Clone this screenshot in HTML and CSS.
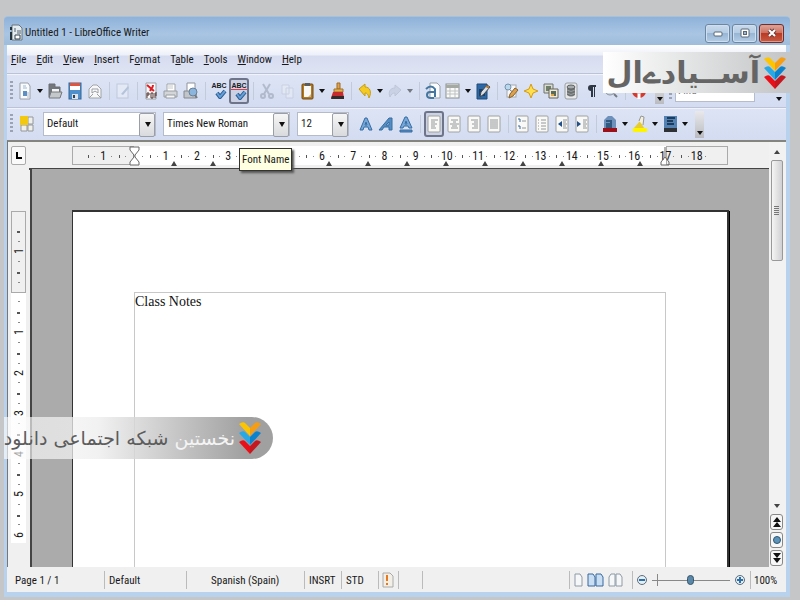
FILE: index.html
```html
<!DOCTYPE html>
<html lang="en">
<head>
<meta charset="utf-8">
<title>Untitled 1 - LibreOffice Writer</title>
<link rel="stylesheet" href="styles.css">
</head>
<body>
<div class="window">
  <header class="titlebar">
    <svg class="app-icon" width="13" height="18" viewBox="0 0 13 18"><path d="M2 1h7l3 3v12H2z" fill="#e4ecef" stroke="#68747c"/><path d="M4 5h2M4 7h2M7 7h4M7 9h4" stroke="#52616c"/><path d="M1 3v3M1 8v8" stroke="#26343c" stroke-width="2"/><path d="M5 11h5v4H5z" fill="#fff" stroke="#33424c"/></svg>
    <h1>Untitled 1 - LibreOffice Writer</h1>
    <button class="win-btn" aria-label="Minimize"><svg width="12" height="10" viewBox="0 0 12 10"><rect x="2" y="4" width="8" height="4" rx="1" fill="#fff" stroke="#5a6674"/></svg></button>
    <button class="win-btn" aria-label="Maximize"><svg width="12" height="12" viewBox="0 0 12 12"><rect x="2" y="2" width="8" height="8" rx="1" fill="#fff" stroke="#5a6674"/><rect x="4.500" y="4.500" width="3" height="3" fill="#9db8d4" stroke="#5a6674"/></svg></button>
    <button class="win-btn close" aria-label="Close"><svg width="12" height="12" viewBox="0 0 12 12"><path d="M3 3l6 6M9 3l-6 6" stroke="#6e3d3c" stroke-width="4"/><path d="M3 3l6 6M9 3l-6 6" stroke="#fff" stroke-width="2"/></svg></button>
  </header>

  <nav class="menubar">
    <a href="#"><u>F</u>ile</a><a href="#"><u>E</u>dit</a><a href="#"><u>V</u>iew</a><a href="#"><u>I</u>nsert</a><a href="#">F<u>o</u>rmat</a><a href="#">T<u>a</u>ble</a><a href="#"><u>T</u>ools</a><a href="#"><u>W</u>indow</a><a href="#"><u>H</u>elp</a>
  </nav>

  <div class="toolbar">
    <i class="grip"></i>
    <button class="tool" aria-label="New"><svg viewBox="0 0 16 18"><path d="M3 1h8l2 3v13H3z" fill="#fafbfc" stroke="#9aa0a8"/><path d="M6 4h3M6 6h4" stroke="#9fb7d0"/><rect x="6" y="9" width="4" height="5" fill="#5c8fc4"/><path d="M11 10v6" stroke="#b7bcc3"/></svg></button>
    <button class="drop" aria-label="New menu"></button>
    <button class="tool" aria-label="Open"><svg viewBox="0 0 16 18"><path d="M2 15V2h6v3h5v9z" fill="#72777b" stroke="#6b6f73"/><path d="M5 7h7v5H5z" fill="#f3f4f5"/><path d="M2 16l2-6h11l-2 6z" fill="#c4c8cb" stroke="#75797d"/></svg></button>
    <button class="tool" aria-label="Save"><svg viewBox="0 0 16 18"><rect x="2" y="1" width="12" height="16" fill="#4f8fcb" stroke="#336594"/><path d="M3 1h10v7H3z" fill="#fff"/><path d="M3 1h10v3H3z" fill="#e2543b"/><path d="M5 12h6v5H5z" fill="#dce2e8"/><path d="M6 13h2v3H6z" fill="#29405a"/></svg></button>
    <button class="tool" aria-label="E-mail"><svg viewBox="0 0 16 18"><path d="M2 16V7l4-4h4l4 4v9z" fill="#f8f8f8" stroke="#a0a4a8"/><path d="M5 11V7h6v4l-3-2zM2 16l4-4M14 16l-4-4" fill="#fff" stroke="#9a9fa4"/></svg></button>
    <i class="sep"></i>
    <button class="tool dim" aria-label="Edit file"><svg viewBox="0 0 16 18"><rect x="2" y="2" width="11" height="14" fill="#eef2f8" stroke="#a9b4c6"/><path d="M6 12l7-8 1 2-6 7z" fill="#93a9c4"/></svg></button>
    <i class="sep"></i>
    <button class="tool" aria-label="Export as PDF"><svg viewBox="0 0 16 18"><path d="M3 1h10v16H3z" fill="#fafafa" stroke="#9ba0a6"/><path d="M4 3l7 6M10 3c0 3-2 4-3 6" stroke="#e01b24" stroke-width="2" fill="none"/><path d="M4 11v5M4 11h2v2H4M8 11v5h2v-5zM12 16v-5h2M12 13h2" stroke="#50302f" fill="none"/></svg></button>
    <button class="tool" aria-label="Print"><svg viewBox="0 0 16 18"><path d="M4 9V2h8v7" fill="#fff" stroke="#a2a6aa"/><path d="M5 4h5M5 6h5" stroke="#c5c8cc"/><path d="M1 9h13v6H1z" fill="#d3d5d8" stroke="#999da1"/><path d="M3 13h9v3H3z" fill="#f6f6f6" stroke="#9a9ea3"/></svg></button>
    <button class="tool" aria-label="Page preview"><svg viewBox="0 0 16 18"><path d="M4 9V1h8v8" fill="#fff" stroke="#8f9499"/><path d="M1 9h12v7H1z" fill="#c1c5c9" stroke="#85898e"/><circle cx="10" cy="10" r="4" fill="#8bb5dc" stroke="#6a7f95"/><path d="M12 13l2 3" stroke="#757b82" stroke-width="2"/></svg></button>
    <i class="sep"></i>
    <button class="tool abc" aria-label="Spelling"><span>ABC</span><svg viewBox="0 0 16 10"><path d="M6 4l3 4 5-6" fill="none" stroke="#2b5d93" stroke-width="4"/><path d="M6 4l3 4 5-6" fill="none" stroke="#669fd6" stroke-width="2"/></svg></button>
    <button class="tool abc pressed" aria-label="AutoSpellcheck"><span class="wavy">ABC</span><svg viewBox="0 0 16 10"><path d="M6 4l3 4 5-6" fill="none" stroke="#2b5d93" stroke-width="4"/><path d="M6 4l3 4 5-6" fill="none" stroke="#669fd6" stroke-width="2"/></svg></button>
    <i class="sep"></i>
    <button class="tool dim" aria-label="Cut"><svg viewBox="0 0 16 18"><path d="M4 2l6 10M11 2L5 12" stroke="#8d97a8" stroke-width="2"/><circle cx="4" cy="14" r="2" fill="none" stroke="#8d97a8" stroke-width="2"/><circle cx="12" cy="14" r="2" fill="none" stroke="#8d97a8" stroke-width="2"/></svg></button>
    <button class="tool dim" aria-label="Copy"><svg viewBox="0 0 16 18"><path d="M3 3h7v9H3zM7 6h7v10H7z" fill="#eceff6" stroke="#bcc2d0"/></svg></button>
    <button class="tool" aria-label="Paste"><svg viewBox="0 0 16 18"><rect x="3" y="2" width="11" height="15" rx="1" fill="#b87918" stroke="#6e4a18"/><path d="M5 4h7v11H5z" fill="#f9f9f7"/><path d="M6 1h5v3H6z" fill="#5a5d60"/><path d="M9 15l3-3v3z" fill="#b9b9b9"/></svg></button>
    <button class="drop" aria-label="Paste menu"></button>
    <button class="tool" aria-label="Format paintbrush"><svg viewBox="0 0 16 18"><path d="M8 1h3v6H8z" fill="#e0a24e" stroke="#9f6b25"/><path d="M5 7h9v3H5z" fill="#e7b04d" stroke="#a1732a"/><path d="M4 10h10l1 6H2z" fill="#c82b2e"/><path d="M3 14h12v3H2z" fill="#36292a"/></svg></button>
    <i class="sep"></i>
    <button class="tool" aria-label="Undo"><svg viewBox="0 0 16 18"><path d="M2 7l6-5v3c5 0 7 5 4 11-1-4-2-5-4-5v3z" fill="#f5cb22" stroke="#c79b13"/></svg></button>
    <button class="drop" aria-label="Undo menu"></button>
    <button class="tool dim" aria-label="Redo"><svg viewBox="0 0 16 18"><path d="M14 8L8 3v3C3 6 1 10 3 15c1-3 3-4 5-4v3z" fill="#bcc5d6" stroke="#a5aec0"/></svg></button>
    <button class="drop dim" aria-label="Redo menu"></button>
    <i class="sep"></i>
    <button class="tool" aria-label="Hyperlink"><svg viewBox="0 0 16 18"><path d="M5 1h7l3 3v12H5z" fill="#fafbfc" stroke="#99a0a8"/><path d="M1 7q5-5 9 0v8M9 10H5q-3 0-3 3t4 3h3" fill="none" stroke="#44769f" stroke-width="2"/></svg></button>
    <button class="tool" aria-label="Table"><svg viewBox="0 0 16 18"><rect x="1" y="2" width="13" height="14" fill="#fafafa" stroke="#8b8f8e"/><path d="M1 3h13v3H1z" fill="#a5a9a4"/><path d="M1 9h13M1 12h13M5 6v10M10 6v10" stroke="#bfc2c1"/></svg></button>
    <button class="drop" aria-label="Table menu"></button>
    <button class="tool" aria-label="Show draw functions"><svg viewBox="0 0 16 18"><path d="M2 2h10v15H2z" fill="#2c68a6" stroke="#204b78"/><path d="M4 7h6v7H4z" fill="#1c3f68"/><path d="M5 15l1-5 6-7 3 2-6 7z" fill="#dde1e5" stroke="#41454b"/><path d="M11 4l3 2" stroke="#b27b35" stroke-width="2"/></svg></button>
    <i class="sep"></i>
    <button class="tool" aria-label="Find and replace"><svg viewBox="0 0 16 18"><rect x="4" y="3" width="9" height="12" fill="#f5f7f8" stroke="#a4aab0"/><circle cx="5" cy="5" r="3" fill="#b9d8ee" stroke="#7593ac"/><path d="M7 8l4 3" stroke="#777"/><path d="M6 16l1-4 5-6 3 2-5 6z" fill="#dba14e" stroke="#8b6128"/></svg></button>
    <button class="tool" aria-label="Navigator"><svg viewBox="0 0 16 18"><path d="M8 2l2 5 5 2-5 2-2 5-2-5-5-2 5-2z" fill="#ffe04a" stroke="#d79b15"/></svg></button>
    <button class="tool" aria-label="Gallery"><svg viewBox="0 0 16 18"><path d="M1 2h9v9H1z" fill="#d9dcd2" stroke="#70736c"/><path d="M3 4h5v5H3z" fill="#707f68"/><path d="M6 7h9v9H6z" fill="#eee8d8" stroke="#66655d"/><path d="M8 9h5v5H8z" fill="#596a58"/><path d="M8 12h3v2H8z" fill="#e2a43c"/></svg></button>
    <button class="tool" aria-label="Data sources"><svg viewBox="0 0 16 18"><rect x="2" y="1" width="12" height="16" rx="2" fill="#e6e8e9" stroke="#9b9fa2"/><path d="M4 5v8q4 3 8 0V5z" fill="#6d7172"/><ellipse cx="8" cy="5" rx="4" ry="2" fill="#a7abad" stroke="#5d6162"/><path d="M4 8q4 3 8 0M4 11q4 3 8 0" fill="none" stroke="#9a9d9f"/></svg></button>
    <button class="tool" aria-label="Nonprinting characters"><svg viewBox="0 0 16 18"><path d="M13 3H8a3 3 0 0 0 0 6v6h2V5h1v10h1V5h1z" fill="#303744"/></svg></button>
    <button class="tool" aria-label="Zoom"><svg viewBox="0 0 16 18"><circle cx="7" cy="8" r="5" fill="#cbd8e8" stroke="#8b919c"/><path d="M11 12l3 3" stroke="#777b84" stroke-width="2"/></svg></button>
    <i class="sep"></i>
    <button class="tool" aria-label="Help"><svg viewBox="0 0 16 18"><circle cx="8" cy="9" r="5" fill="none" stroke="#d8392c" stroke-width="4"/><path d="M8 12v5M3 6l2 1M13 6l-2 1" stroke="#fff" stroke-width="3"/></svg></button>
    <button class="overflow" aria-label="More tools"></button>
    <i class="grip find-grip"></i>
    <input class="find" type="text" placeholder="Find" aria-label="Find">
    <button class="overflow last" aria-label="More find tools"></button>
  </div>

  <div class="toolbar format">
    <i class="grip"></i>
    <button class="tool styles" aria-label="Styles and formatting"><svg viewBox="0 0 16 18"><path d="M9 2h5v7H9zM2 10h6v6H2zM9 10h5v6H9z" fill="#f0f0ea" stroke="#b0ada5"/><path class="bare" d="M1 1h8v9H1z" fill="#f2c811"/></svg></button>
    <span class="combo style-box"><select aria-label="Paragraph style"><option>Default</option></select></span>
    <span class="combo font-box"><select aria-label="Font name"><option>Times New Roman</option></select><span class="tooltip" role="tooltip">Font Name</span></span>
    <span class="combo size-box"><select aria-label="Font size"><option>12</option></select></span>
    <button class="tool" aria-label="Bold"><svg viewBox="0 0 16 18"><path d="M2 15L7 3h2l5 12h-3l-1-3H6l-1 3zM7 10h2L8 7z" fill="#77a7d8" stroke="#376da3"/></svg></button>
    <button class="tool" aria-label="Italic"><svg viewBox="0 0 16 18"><path d="M1 15L11 3h3v12h-3v-3H6l-2 3zM8 10h3V7z" fill="#568dc1" stroke="#376da3"/></svg></button>
    <button class="tool" aria-label="Underline"><svg viewBox="0 0 16 18"><path d="M2 13L7 2h2l5 11h-3l-1-2H6l-1 2zM7 9h2L8 6z" fill="#77a7d8" stroke="#376da3"/><path d="M2 15h12v2H2z" fill="#568dc1"/></svg></button>
    <i class="sep"></i>
    <button class="tool pressed" aria-label="Align left"><svg viewBox="0 0 16 18"><use href="#sheet"/><path d="M5 5h7M5 7h4M5 9h6M5 11h4M5 13h5"/></svg></button>
    <button class="tool" aria-label="Center"><svg viewBox="0 0 16 18"><use href="#sheet"/><path d="M5 5h7M7 7h3M4 9h9M6 11h5M5 13h7"/></svg></button>
    <button class="tool" aria-label="Align right"><svg viewBox="0 0 16 18"><use href="#sheet"/><path d="M5 5h7M8 7h4M6 9h6M8 11h4M6 13h6"/></svg></button>
    <button class="tool" aria-label="Justify"><svg viewBox="0 0 16 18"><use href="#sheet"/><path d="M4 5h8M4 7h8M4 9h8M4 11h8M4 13h8"/></svg></button>
    <i class="sep"></i>
    <button class="tool" aria-label="Numbering"><svg viewBox="0 0 16 18"><use href="#sheet"/><path d="M8 6h4M8 13h4"/><path d="M4 4h2v3M4 11h2v3" fill="none" class="blue"/></svg></button>
    <button class="tool" aria-label="Bullets"><svg viewBox="0 0 16 18"><use href="#sheet"/><path d="M7 5h5M7 8h5M7 11h5M7 14h5M4 5h1M4 8h1M4 11h1M4 14h1"/></svg></button>
    <button class="tool" aria-label="Decrease indent"><svg viewBox="0 0 16 18"><use href="#sheet"/><path d="M9 5h4M9 7h3M9 9h4M9 11h3M9 13h4"/><path d="M8 6v6L4 9z" fill="#204f8c" class="bare"/></svg></button>
    <button class="tool" aria-label="Increase indent"><svg viewBox="0 0 16 18"><use href="#sheet"/><path d="M9 5h4M9 7h3M9 9h4M9 11h3M9 13h4"/><path d="M3 6v6l4-3z" fill="#204f8c" class="bare"/></svg></button>
    <i class="sep"></i>
    <button class="tool" aria-label="Font color"><svg viewBox="0 0 16 18"><path class="bare" d="M2 13V5l4-4h4l4 4v8z" fill="#6d91ba"/><path class="bare" d="M4 5h6v8H4V8h4V7H4z" fill="#31587e"/><path class="bare" d="M1 13h14v4H1z" fill="#9c1019"/></svg></button>
    <button class="drop" aria-label="Font color menu"></button>
    <button class="tool" aria-label="Highlighting"><svg viewBox="0 0 16 18"><path class="bare" d="M2 13l6-7 4 7z" fill="#e6cc2c"/><path d="M7 6l2-5 3 1-1 8" fill="#f5f0d9"/><path class="bare" d="M1 13h14v4H1z" fill="#fff400"/></svg></button>
    <button class="drop" aria-label="Highlighting menu"></button>
    <button class="tool" aria-label="Background color"><svg viewBox="0 0 16 18"><path class="bare" d="M2 1h13v12H2z" fill="#5381b1"/><path d="M5 3h8M5 6h6M5 9h7" class="navy"/><path class="bare" d="M2 13h13v4H2z" fill="#2e3136"/></svg></button>
    <button class="drop" aria-label="Background color menu"></button>
    <button class="overflow tall" aria-label="More formatting"></button>
  </div>

  <main class="editor">
    <aside class="side">
      <button class="tab-kind" aria-label="Tab type"><svg width="8" height="8" viewBox="0 0 8 8"><path d="M2 0v6h5" fill="none" stroke="#000" stroke-width="2"/></svg></button>
      <div class="vruler"><div class="vmargin"></div><div class="vscale">
        <i></i><b><span>1</span></b><b></b><b><span>1</span></b><b><span>2</span></b><b><span>3</span></b><b><span>4</span></b><b><span>5</span></b><b><span>6</span></b>
      </div></div>
    </aside>

    <section class="center">
      <div class="hruler">
        <div class="hmargins"><i></i><i></i></div>
        <div class="hscale">
          <i></i><b>1</b><b></b><b>1</b><b>2</b><b>3</b><b></b><b></b><b>6</b><b>7</b><b>8</b><b>9</b><b>10</b><b>11</b><b>12</b><b>13</b><b>14</b><b>15</b><b>16</b><b>17</b><b>18</b><i></i>
        </div>
        <div class="tabs"><i></i><i></i><i></i><i></i><i></i><i></i><i></i><i></i><i></i><i></i><i></i><i></i><i></i></div>
        <div class="indents">
          <svg width="11" height="20" viewBox="0 0 11 20"><path d="M1 1h9v3L6 9v2l4 5v3H1v-3l4-5V9L1 4z" fill="#fff" stroke="#666"/></svg>
          <svg width="11" height="20" viewBox="0 0 11 20"><path d="M5 1v10l4 5v3H1v-3l4-5" fill="none" stroke="#666"/></svg>
        </div>
      </div>
      <div class="canvas">
        <article class="page"><div class="text-area"><p>Class Notes</p></div></article>
      </div>
    </section>

    <aside class="scroll">
      <button class="arrow up" aria-label="Scroll up"></button>
      <div class="track"><div class="thumb"><i></i></div></div>
      <button class="arrow down" aria-label="Scroll down"></button>
      <button class="nav" aria-label="Previous page"><svg width="10" height="12" viewBox="0 0 10 12"><path d="M5 1l4 5H1zM5 6l4 5H1z" fill="#111"/></svg></button>
      <button class="nav" aria-label="Navigation"><svg width="10" height="12" viewBox="0 0 10 12"><circle cx="5" cy="6" r="3.500" fill="#5d93b9" stroke="#2e5674"/></svg></button>
      <button class="nav" aria-label="Next page"><svg width="10" height="12" viewBox="0 0 10 12"><path d="M5 6L1 1h8zM5 11L1 6h8z" fill="#111"/></svg></button>
    </aside>
  </main>

  <footer class="status">
    <span class="s-page">Page 1 / 1</span>
    <span class="s-style">Default</span>
    <span class="s-lang">Spanish (Spain)</span>
    <span class="s-mode">INSRT</span>
    <span class="s-mode">STD</span>
    <span class="s-icon"><svg width="12" height="16" viewBox="0 0 12 16"><path d="M1 1h7l3 3v11H1z" fill="#f4efe6" stroke="#aaa"/><path d="M5 3v6M5 11v2" stroke="#e8781c" stroke-width="2"/></svg></span>
    <span class="s-blank"></span>
    <span class="s-rest"></span>
    <span class="s-views">
      <button aria-label="Single page"><svg width="9" height="14" viewBox="0 0 9 14"><path d="M1 1h5l2 3v9H1z" fill="#f6f7f8" stroke="#8e9aa6"/></svg></button>
      <button aria-label="Multiple pages"><svg width="17" height="14" viewBox="0 0 17 14"><path d="M1 1h5l2 3v9H1zM9 1h5l2 3v9H9z" fill="#c9def3" stroke="#39689f"/></svg></button>
      <button aria-label="Book mode"><svg width="15" height="14" viewBox="0 0 15 14"><path d="M7 1H3L1 4v9h6zM8 1h4l2 3v9H8z" fill="#f6f7f8" stroke="#8e9aa6"/></svg></button>
    </span>
    <span class="s-zoom">
      <button aria-label="Zoom out"><svg width="12" height="12" viewBox="0 0 12 12"><circle cx="6" cy="6" r="4.500" fill="#e4eef5" stroke="#5c6d7b"/><path d="M3 6h6" stroke="#2e6fa8" stroke-width="2"/></svg></button>
      <input type="range" min="0" max="100" value="49" aria-label="Zoom">
      <button aria-label="Zoom in"><svg width="12" height="12" viewBox="0 0 12 12"><circle cx="6" cy="6" r="4.500" fill="#e4eef5" stroke="#5c6d7b"/><path d="M3 6h6M6 3v6" stroke="#2e6fa8" stroke-width="2"/></svg></button>
    </span>
    <span class="s-pct">100%</span>
  </footer>
</div>

<div class="brand" dir="rtl" lang="fa">
  <svg width="22" height="32" viewBox="0 0 22 32"><use href="#chevrons"/></svg>
  <strong>آســیادےال</strong>
</div>
<div class="ribbon" dir="rtl" lang="fa">
  <svg width="22" height="32" viewBox="0 0 22 32"><use href="#chevrons"/></svg>
  <span><em>نخستین</em> شبکه اجتماعی دانلود</span>
</div>

<svg class="defs" width="0" height="0" aria-hidden="true">
  <g id="sheet"><rect x="2" y="1" width="12" height="16" rx="1" fill="#f9f9f7" stroke="#a0a29f"/></g>
  <g id="chevrons">
    <path d="M0 2q4-3 6-1l5 5v8z" fill="#fdc400"/><path d="M22 2q-4-3-6-1l-5 5v8z" fill="#f69d12"/>
    <path d="M0 11q4-3 6-1l5 5v8z" fill="#28a9e6"/><path d="M22 11q-4-3-6-1l-5 5v8z" fill="#0a82cd"/>
    <path d="M0 20q4-3 6-1l5 5v8z" fill="#ea1019"/><path d="M22 20q-4-3-6-1l-5 5v8z" fill="#c41820"/>
  </g>
</svg>
</body>
</html>
```
FILE: styles.css
```css
* { box-sizing: border-box; }
body {
  margin: 0;
  height: 100vh;
  padding: 16px 10px 3px 4px;
  background: #c4c6c7;
  color: #181818;
  font: 11px/16px "Roboto Condensed", "Noto Sans Condensed", Roboto, sans-serif;
  overflow: hidden;
  position: relative;
}
button { margin: 0; padding: 0; border: 0; background: none; font: inherit; color: inherit; }
svg { display: block; }
.defs { position: absolute; }

.window {
  height: 100%;
  display: flex;
  flex-direction: column;
  border: solid #b8d2ee;
  border-width: 0 4px 5px 3px;
  border-radius: 4px 4px 0 0;
}

.titlebar {
  height: 29px;
  flex: none;
  display: flex;
  align-items: center;
  gap: 2px;
  margin: 0 -4px 0 -3px;
  padding: 4px 6px 0 6px;
  background: linear-gradient(#8fb2d9, #a9c5e3 60%, #9ebcdb);
  border-top: 1px solid #a9c0d8;
  border-radius: 4px 4px 0 0;
}
.titlebar h1 { margin: 0; flex: 1; font-size: 11px; font-weight: normal; }
.win-btn {
  width: 25px;
  height: 19px;
  display: grid;
  place-items: center;
  border: 1px solid #6d87a3;
  border-radius: 3px;
  background: linear-gradient(#c9daeb, #b5cce4 48%, #98b6d5 50%, #b2cce6);
  box-shadow: inset 0 0 0 1px #cfdfef;
}
.win-btn.close {
  border-color: #6d3030;
  background: linear-gradient(#dfa79b, #cd6d5c 48%, #b93a25 50%, #c95b43);
  box-shadow: inset 0 0 0 1px #dd9b8d;
}

.menubar {
  height: 28px;
  flex: none;
  display: flex;
  align-items: center;
  gap: 10px;
  padding: 2px 4px 0;
  background: linear-gradient(#fff, #edf0f9 35%, #d6dcef 40%, #dfe4f4);
}
.menubar a { color: #181818; text-decoration: none; }

.toolbar {
  height: 34px;
  flex: none;
  display: flex;
  align-items: center;
  padding: 0 0 0 3px;
  background: linear-gradient(#dde4f5, #d3dcf1);
  border-top: 1px solid #bcc3d6;
  box-shadow: inset 0 1px #f0f3fb;
}
.grip {
  width: 3px;
  height: 20px;
  margin-right: 2px;
  background: repeating-linear-gradient(#9aa2b4 0 2px, transparent 2px 4px);
  flex: none;
}
.tool { width: 20px; height: 26px; flex: none; display: grid; place-items: center; }
.tool svg { width: 16px; height: 18px; }
.tool.dim, .drop.dim { opacity: .5; }
.drop { width: 10px; height: 26px; flex: none; display: grid; place-items: center; }
.drop::after { content: ""; border: 3px solid transparent; border-top: 4px solid #111; border-bottom: 0; }
.sep { width: 8px; height: 18px; flex: none; background: linear-gradient(90deg, transparent 4px, #c3cadb 4px 5px, transparent 5px); }
.pressed { border: 2px solid #6e7489; border-radius: 3px; background: #ccd2e4; }
.abc { align-content: center; color: #1a1d25; font: bold 7px/7px "Liberation Sans", sans-serif; }
.abc svg { height: 10px; }
.abc .wavy { border-bottom: 1px solid #e03c46; }
.overflow {
  width: 9px;
  height: 26px;
  margin-left: 6px;
  flex: none;
  display: grid;
  place-items: end center;
  padding-bottom: 3px;
  background: linear-gradient(#e9e9ec, #b9bbc0);
}
.overflow::after { content: ""; border: 3px solid transparent; border-top: 4px solid #111; border-bottom: 0; }
.find-grip { margin: 0 3px 0 5px; }
.find { width: 80px; height: 23px; border: 1px solid #b6bccb; background: #fff; padding: 0 2px; font: inherit; color: #222; }
.overflow.last { margin-left: auto; margin-right: 3px; background: none; }

.format { height: 33px; }
.format svg path { stroke: #94979a; }
.format .tool[aria-label="Bold"] path, .format .tool[aria-label="Italic"] path, .format .tool[aria-label="Underline"] path { stroke: #376da3; }
.format svg .bare { stroke: none; }
.format svg .blue { stroke: #39689c; }
.format svg .navy { stroke: #1d3c5c; stroke-width: 2; }
.styles { width: 23px; margin-right: 5px; }
.combo { position: relative; display: block; height: 24px; margin-right: 7px; flex: none; }
.combo select {
  appearance: none;
  display: block;
  width: 100%;
  height: 24px;
  padding: 0 3px;
  border: 1px solid #b5bbc9;
  border-radius: 0;
  background: #fff;
  color: #181818;
  font: inherit;
}
.combo::before {
  content: "";
  position: absolute;
  right: 1px;
  top: 1px;
  width: 14px;
  height: 22px;
  border: 1px solid #9a9ea6;
  border-radius: 2px;
  background: linear-gradient(#f6f6f6, #d9dadd);
  pointer-events: none;
}
.combo::after {
  content: "";
  position: absolute;
  right: 5px;
  top: 10px;
  border: 3px solid transparent;
  border-top: 5px solid #111;
  border-bottom: 0;
  pointer-events: none;
}
.style-box { width: 113px; }
.font-box { width: 127px; }
.size-box { width: 52px; }
.tooltip {
  position: absolute;
  z-index: 3;
  left: 76px;
  top: 36px;
  padding: 3px 2px 2px;
  white-space: nowrap;
  border: 1px solid #333;
  background: #ffffe1;
  box-shadow: 2px 2px 2px #555;
}
.overflow.tall { height: 27px; margin-left: 5px; }

.editor {
  flex: 1;
  min-height: 0;
  display: grid;
  grid-template-columns: 22px 1fr 17px;
  border-top: 2px solid #85857f;
  border-left: 1px solid #777;
  background: #f0f0f0;
}
.side { display: flex; flex-direction: column; min-height: 0; padding: 4px 3px 24px; }
.tab-kind { width: 15px; height: 19px; flex: none; display: grid; place-items: center; border: 1px solid #aaa; border-radius: 2px; background: #fafafa; }
.vruler { flex: 1; min-height: 0; margin-top: 46px; width: 15px; display: grid; overflow: hidden; background: #fff; align-content: start; font-size: 12px; }
.vmargin { grid-area: 1 / 1; height: 82px; border: 1px solid #aaa; background: #f0f0f0; }
.vscale { grid-area: 1 / 1; height: 344px; display: grid; grid-template-rows: 1fr repeat(8, 2fr); position: relative; }
.vscale b {
  display: grid;
  place-items: center;
  font-weight: normal;
  background:
    linear-gradient(#555, #555) 50% 0 / 3px 2px no-repeat,
    linear-gradient(#888, #888) 50% 25% / 2px 1px no-repeat,
    linear-gradient(#888, #888) 50% 75% / 2px 1px no-repeat;
}
.vscale span { transform: rotate(-90deg); }

.center { min-width: 0; display: flex; flex-direction: column; }
.hruler { height: 28px; flex: none; padding: 4px 41px 4px 43px; display: grid; border-bottom: 2px solid #444; margin-bottom: -1px; margin-left: -1px; font-size: 12px; }
.hruler > div { grid-area: 1 / 1; position: relative; min-width: 0; }
.hmargins { display: grid; grid-template-columns: 4fr 34fr 4fr; height: 19px; background: #fff; }
.hmargins i { border: 1px solid #aaa; background: #f0f0f0; }
.hmargins i + i { grid-column: 3; }
.hscale { display: grid; grid-template-columns: 1fr repeat(20, 2fr) 1fr; height: 19px; }
.hscale b {
  min-width: 0;
  text-align: center;
  font-weight: normal;
  line-height: 20px;
  background:
    linear-gradient(#555, #555) 0 50% / 1px 3px no-repeat,
    linear-gradient(#888, #888) 22% 50% / 1px 1px no-repeat,
    linear-gradient(#888, #888) 78% 50% / 1px 1px no-repeat;
}
.tabs { display: flex; justify-content: space-between; align-items: end; padding: 0 85px 0 99px; }
.tabs i { border: 3px solid transparent; border-bottom: 5px solid #444; border-top: 0; }
.indents { display: flex; justify-content: space-between; padding: 0 57px; }

.canvas { flex: 1; min-height: 0; border-left: 2px solid #444; padding: 41px 40px 0 40px; background: #ababab; overflow: hidden; display: flex; }
.page { flex: 1; padding: 80px 61px 0; background: #fff; border: solid #333; border-width: 2px 2px 0 1px; box-shadow: 1px 1px #000; }
.text-area { height: 100%; border: 1px solid #c8c8c8; border-bottom: 0; }
.text-area p { margin: 0; color: #111; font: 14px/18px "Liberation Serif", serif; }

.scroll { display: flex; flex-direction: column; align-items: center; gap: 2px; padding: 4px 2px 1px 0; background: #f2f2f2; }
.arrow { width: 12px; height: 12px; flex: none; display: grid; place-items: center; }
.arrow::after { content: ""; border: 3px solid transparent; }
.up::after { border-bottom: 4px solid #444; border-top: 0; }
.down::after { border-top: 4px solid #444; border-bottom: 0; }
.track { flex: 1; min-height: 0; }
.thumb { width: 12px; height: 101px; display: grid; place-items: center; border: 1px solid #999; border-radius: 2px; background: linear-gradient(90deg, #f5f5f5, #d0d0d3); }
.thumb i { width: 5px; height: 9px; background: repeating-linear-gradient(#777 0 1px, transparent 1px 2px); }
.nav { width: 13px; height: 16px; flex: none; display: grid; place-items: center; border: 1px solid #888; border-radius: 3px; background: #f7f7f7; }

.status { height: 25px; flex: none; display: flex; align-items: center; padding: 3px 0 2px; background: #f0f0f0; }
.status > span { height: 18px; line-height: 20px; flex: none; border-right: 1px solid #bbb; padding-left: 4px; white-space: nowrap; }
.status .s-page { width: 98px; padding-left: 8px; }
.s-style { width: 82px; }
.status .s-lang { width: 118px; padding-left: 24px; }
.s-mode { width: 37px; }
.status .s-icon { width: 20px; padding: 1px 3px; }
.s-blank { width: 24px; }
.status .s-rest { flex: 1; }
.status .s-views { display: flex; align-items: center; gap: 4px; width: 63px; }
.status .s-zoom { display: flex; align-items: center; gap: 4px; width: 118px; padding-left: 3px; }
.status .s-pct { border: 0; width: 35px; padding-left: 3px; }
.s-zoom input {
  appearance: none;
  width: 78px;
  height: 12px;
  margin: 0;
  background: linear-gradient(#888, #888) 0 50% / 100% 1px no-repeat, linear-gradient(#888, #888) 5px 0 / 1px 100% no-repeat;
}
.s-zoom input::-webkit-slider-thumb { appearance: none; width: 7px; height: 10px; border: 1px solid #36566e; border-radius: 4px; background: #5b88a8; }

.brand {
  position: absolute;
  z-index: 4;
  top: 52px;
  right: 0;
  width: 197px;
  height: 41px;
  display: flex;
  align-items: center;
  gap: 4px;
  padding: 0 14px 0 4px;
  background: linear-gradient(90deg, #fff, #c4c6c7 92%);
  color: #656565;
}
.brand svg, .ribbon svg { flex: none; }
.brand strong { font: bold 30px/41px "DejaVu Sans", sans-serif; white-space: nowrap; }
.ribbon {
  position: absolute;
  z-index: 4;
  top: 417px;
  left: 4px;
  width: 269px;
  height: 42px;
  display: flex;
  align-items: center;
  gap: 4px;
  padding-right: 12px;
  border-radius: 0 22px 22px 0;
  background: linear-gradient(90deg, rgb(255 255 255 / .6), rgb(238 238 238 / .8) 35%, #a0a0a0 90%);
  color: #5c5c5c;
  font: 19px/38px "DejaVu Sans", sans-serif;
  white-space: nowrap;
}
.ribbon em { font-style: normal; color: #f4f4f4; }
```
